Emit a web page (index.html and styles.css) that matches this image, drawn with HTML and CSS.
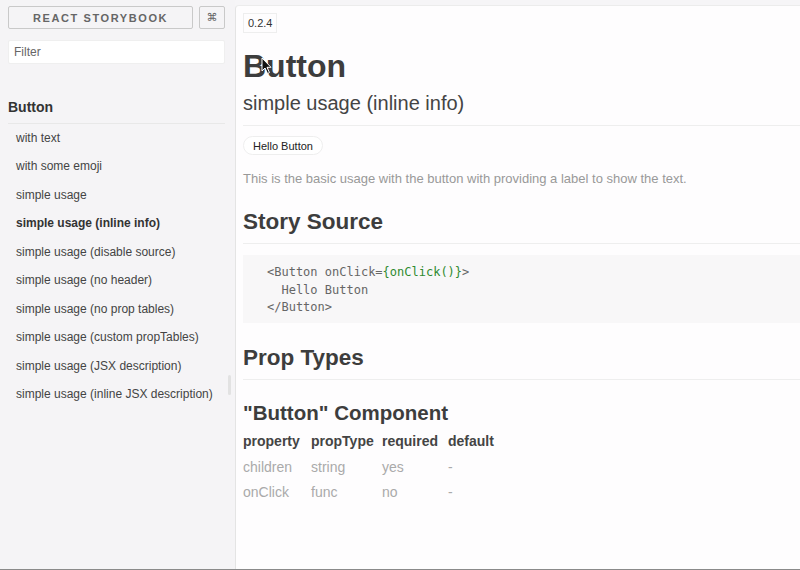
FILE: index.html
```html
<!DOCTYPE html>
<html>
<head>
<meta charset="utf-8">
<link rel="stylesheet" href="styles.css">
</head>
<body>
<div class="app">
  <aside class="sidebar">
    <div class="topbar">
      <button class="brand">REACT STORYBOOK</button>
      <button class="shortcut">⌘</button>
    </div>
    <input class="filter" type="text" placeholder="Filter">
    <h3 class="kind">Button</h3>
    <ul class="stories">
      <li>with text</li>
      <li>with some emoji</li>
      <li>simple usage</li>
      <li class="active">simple usage (inline info)</li>
      <li>simple usage (disable source)</li>
      <li>simple usage (no header)</li>
      <li>simple usage (no prop tables)</li>
      <li>simple usage (custom propTables)</li>
      <li>simple usage (JSX description)</li>
      <li>simple usage (inline JSX description)</li>
    </ul>
    <div class="scroll-thumb"></div>
  </aside>
  <main class="preview">
    <span class="version">0.2.4</span>
    <div class="header">
      <h1 class="title">Button</h1>
      <h2 class="subtitle">simple usage (inline info)</h2>
      <svg class="cursor" width="12" height="18" viewBox="0 0 12 18"><path d="M1 1 L1 14 L4 11 L6.5 16.5 L8.5 15.6 L6 10.3 L10 10.3 Z" fill="#111" stroke="#fff" stroke-width="1"/></svg>
    </div>
    <button class="hello">Hello Button</button>
    <p class="desc">This is the basic usage with the button with providing a label to show the text.</p>
    <h2 class="section">Story Source</h2>
    <pre class="code"><code>&lt;Button onClick=<span class="fn">{onClick()}</span>&gt;
  Hello Button
&lt;/Button&gt;</code></pre>
    <h2 class="section">Prop Types</h2>
    <h3 class="component">"Button" Component</h3>
    <div class="props">
      <div class="th">property</div><div class="th">propType</div><div class="th">required</div><div class="th">default</div>
      <div class="td">children</div><div class="td">string</div><div class="td">yes</div><div class="td">-</div>
      <div class="td">onClick</div><div class="td">func</div><div class="td">no</div><div class="td">-</div>
    </div>
  </main>
</div>
</body>
</html>
```

FILE: styles.css
```css
* { box-sizing: border-box; }
html, body {
  margin: 0;
  padding: 0;
  height: 570px;
  overflow: hidden;
  background: #f6f5f7;
  font-family: "Liberation Sans", Arial, sans-serif;
}
.app {
  display: flex;
  height: 570px;
  border-bottom: 1px solid #8a8a8a;
}
.sidebar {
  position: relative;
  width: 235px;
  flex: none;
  padding: 6px 10px 0 8px;
  background: #f5f4f6;
}
.topbar {
  display: flex;
  gap: 6px;
  height: 23px;
}
.brand {
  width: 186px;
  height: 23px;
  border: 1px solid #c9c9c9;
  border-radius: 2px;
  background: #f5f4f6;
  color: #666;
  font-family: "Liberation Sans", Arial, sans-serif;
  font-weight: bold;
  font-size: 11px;
  letter-spacing: 1.6px;
  padding: 0;
}
.shortcut {
  width: 26px;
  height: 23px;
  border: 1px solid #c9c9c9;
  border-radius: 2px;
  background: #f5f4f6;
  color: #666;
  font-family: "DejaVu Sans", sans-serif;
  font-size: 11px;
  padding: 0;
}
.filter {
  display: block;
  margin-top: 11px;
  width: 217px;
  height: 24px;
  border: 1px solid #efefef;
  border-radius: 2px;
  background: #fff;
  padding: 0 5px;
  font-family: "Liberation Sans", Arial, sans-serif;
  font-size: 12px;
  color: #444;
  outline: none;
}
.filter::placeholder { color: #666; }
.kind {
  margin: 35px 0 0;
  font-size: 14px;
  line-height: 16px;
  font-weight: bold;
  color: #333;
  padding-bottom: 8px;
  border-bottom: 1px solid #e8e8e8;
}
.stories {
  list-style: none;
  margin: 0;
  padding: 0 0 0 8px;
}
.stories li {
  height: 28.44px;
  line-height: 28.44px;
  font-size: 12px;
  color: #444;
  white-space: nowrap;
}
.stories li.active { font-weight: bold; color: #333; }
.scroll-thumb {
  position: absolute;
  left: 228px;
  top: 375px;
  width: 3px;
  height: 20px;
  background: #e2e2e2;
  border-radius: 2px;
}
.preview {
  flex: 1;
  margin-top: 5px;
  background: #fefdfe;
  border-top: 1px solid #ececec;
  border-left: 1px solid #e4e4e4;
  border-top-left-radius: 4px;
  padding: 7px 0 0 7px;
  overflow: hidden;
  color: #444;
}
.version {
  display: inline-block;
  height: 20px;
  line-height: 18px;
  padding: 0 4px;
  border: 1px solid #eee;
  font-size: 11px;
  color: #333;
}
.header {
  position: relative;
  border-bottom: 1px solid #eee;
  padding-bottom: 10px;
}
.title {
  margin: 14px 0 0;
  font-size: 32px;
  line-height: 38px;
  font-weight: bold;
  color: #3d3d3d;
}
.subtitle {
  margin: 6px 0 0;
  font-size: 20px;
  line-height: 24px;
  font-weight: normal;
  color: #444;
}
.cursor {
  position: absolute;
  left: 18px;
  top: 10px;
}
.hello {
  display: block;
  margin-top: 10px;
  height: 19px;
  padding: 0 9px;
  border: 1px solid #eee;
  border-radius: 10px;
  background: #fff;
  font-family: "Liberation Sans", Arial, sans-serif;
  font-size: 11px;
  color: #222;
}
.desc {
  margin: 15px 0 0;
  font-size: 13px;
  line-height: 18px;
  color: #999;
}
.section {
  margin: 20px 0 0;
  font-size: 22.5px;
  line-height: 28px;
  font-weight: bold;
  color: #3d3d3d;
  padding-bottom: 7px;
  border-bottom: 1px solid #eee;
}
.code {
  margin: 11px 0 0;
  background: #f8f7f8;
  padding: 9px 24px 6px;
  font-family: "DejaVu Sans Mono", monospace;
  font-size: 12px;
  line-height: 17.5px;
  color: #666;
}
.code .fn { color: #2f8a2f; }
.code + .section { margin-top: 21px; }
.component {
  margin: 21px 0 0;
  font-size: 20.5px;
  line-height: 24px;
  font-weight: bold;
  color: #3d3d3d;
}
.props {
  margin-top: 4px;
  display: grid;
  grid-template-columns: 68px 71px 66px auto;
  grid-auto-rows: 25.5px;
  align-items: center;
  font-size: 14px;
}
.th { font-weight: bold; color: #444; }
.td { color: #aaa; }
```
